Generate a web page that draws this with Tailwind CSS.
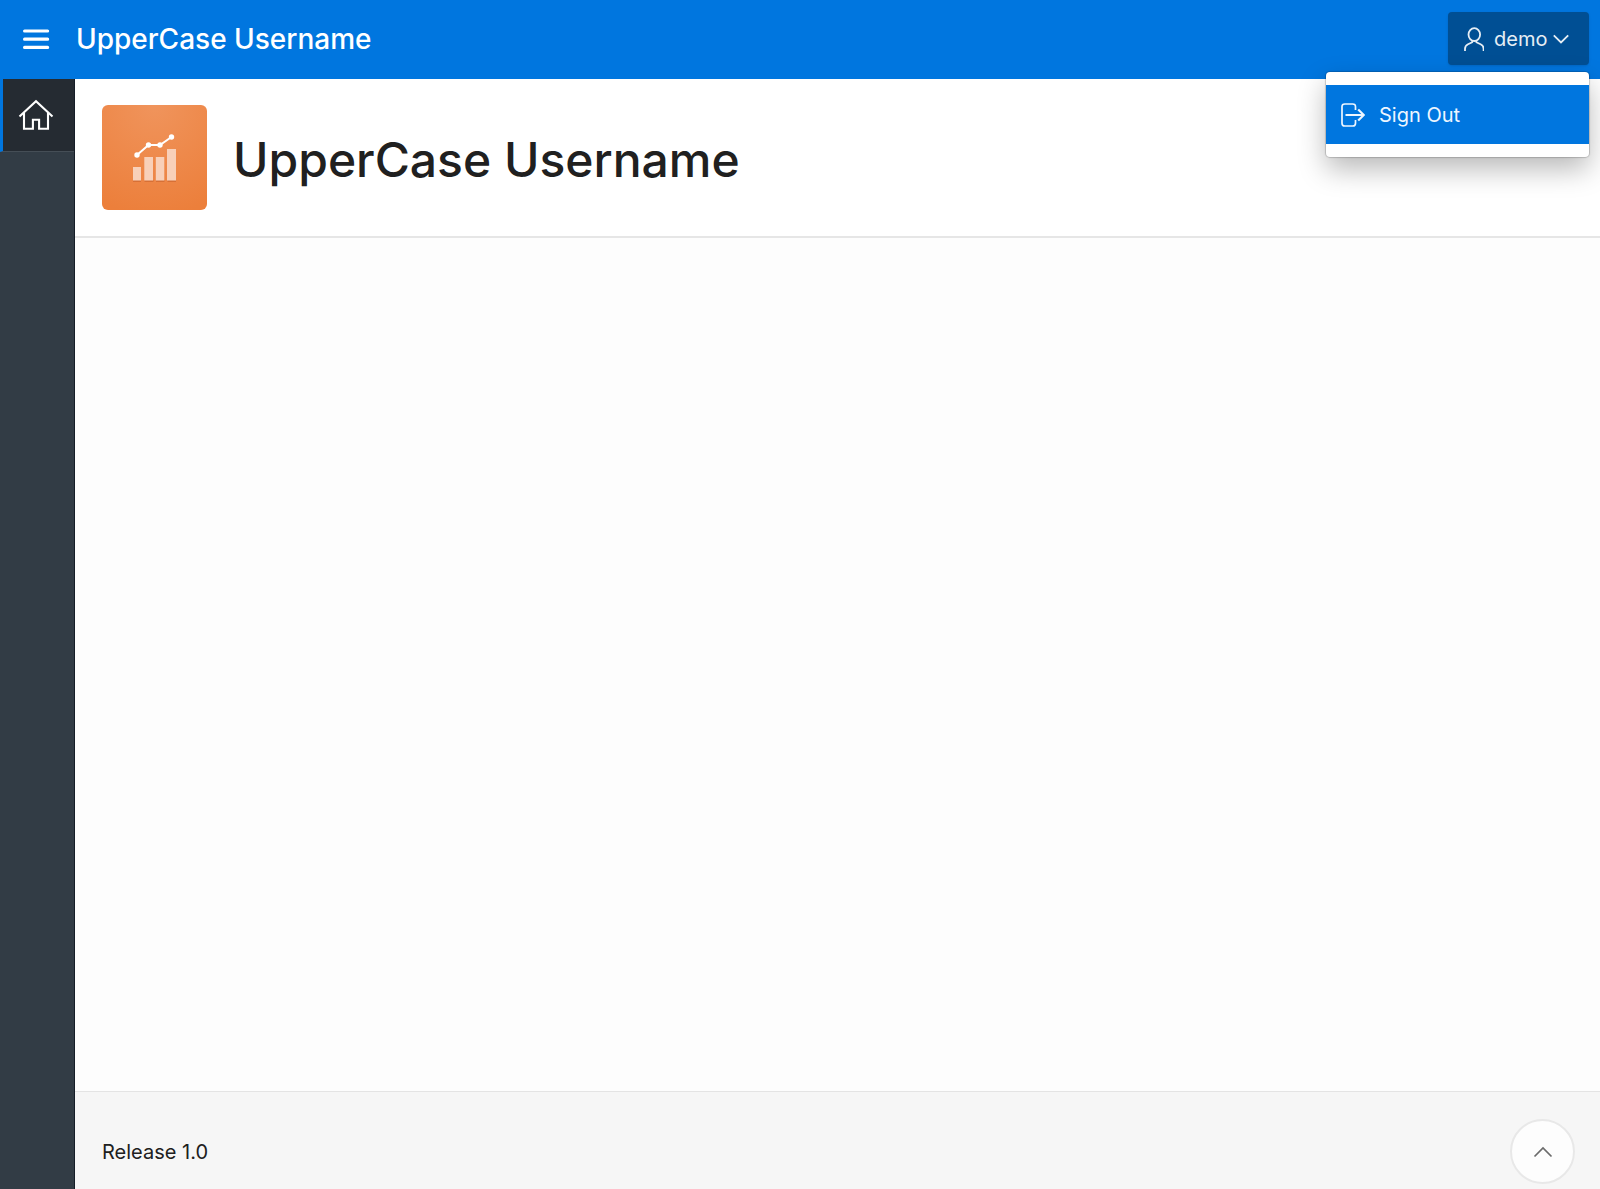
<!DOCTYPE html>
<html lang="en">
<head>
<meta charset="utf-8">
<meta name="viewport" content="width=device-width, initial-scale=1">
<title>UpperCase Username</title>
<script src="https://cdn.jsdelivr.net/npm/@tailwindcss/browser@4"></script>
</head>
<body class="flex min-h-screen flex-col bg-[#fdfdfd] font-['Inter',sans-serif] text-xl text-[#202020]">
  <header class="flex h-[79px] items-center bg-[#0076df] pr-[11px] pb-0.5 text-white">
    <button type="button" aria-label="Toggle navigation" class="flex w-[72px] justify-center">
      <svg class="h-6 w-7" viewBox="0 0 28 24" fill="none" stroke="currentColor" stroke-width="3.2" stroke-linecap="round"><path d="M2.600 4h23M2.600 12.200h23M2.600 20.400h23"/></svg>
    </button>
    <a href="#" class="pl-1 text-[28px] leading-8 font-medium">UpperCase Username</a>
    <div class="relative ml-auto">
      <button type="button" aria-haspopup="menu" aria-expanded="true" class="flex h-[53px] w-[141px] items-center rounded bg-[#004f94] pl-4 text-[#e6eef5] shadow">
        <svg class="h-6 w-5" viewBox="0 0 20 24" fill="none" stroke="currentColor" stroke-width="1.8"><ellipse cx="10.3" cy="7.6" rx="5.8" ry="6.4"/><path d="M1 24v-2.200c0-2.300 1-3.500 3-4.500l3.700-1.800c.8-.4.800-1 .6-1.800M19.600 24v-2.200c0-2.300-1-3.500-3-4.500l-3.700-1.800c-.8-.4-.8-1-.6-1.800"/></svg>
        <span class="ml-2.5">demo</span>
        <svg class="ml-1.5 h-4 w-4" viewBox="0 0 16 16" fill="none" stroke="currentColor" stroke-width="1.8"><path d="M.8 4.300 8 11.500l7.200-7.200"/></svg>
      </button>
      <div role="menu" class="absolute top-full right-0 z-10 mt-[7px] w-[263px] rounded bg-white py-[13px] shadow-[0_0_1px_1px_rgba(0,0,0,0.18),0_12px_28px_rgba(0,0,0,0.28)]">
        <button type="button" role="menuitem" class="flex h-[59px] w-full items-center bg-[#0076df] pl-[15px] text-[#eef6ff]">
          <svg class="h-6 w-6" viewBox="0 0 24 24" fill="none" stroke="currentColor" stroke-width="1.7"><path d="M14.500 7V3.800Q14.500 1 11.700 1H3.800Q1 1 1 3.800v16.400Q1 23 3.800 23h7.900q2.800 0 2.800-2.800V17"/><path d="M4.500 12H23M17.200 6.500l5.600 5.500-5.600 5.500" stroke-width="2.2"/></svg>
          <span class="ml-3.5">Sign Out</span>
        </button>
      </div>
    </div>
  </header>
  <div class="flex flex-1">
    <nav aria-label="Main" class="w-[75px] shrink-0 border-r border-[#151d27] bg-[#323c45]">
      <a href="#" aria-label="Home" class="flex h-[73px] items-center justify-center border-b border-l-3 border-b-[#454e56] border-l-[#0076df] bg-[#252b32] pr-1.5 text-white">
        <svg class="h-8 w-9" viewBox="0 0 36 32" fill="none" stroke="currentColor" stroke-width="2.1"><path d="M1.500 17.500 18 2.300l16.500 15.200"/><path d="M6 13.500v16.300h8.900v-9h6.200v9H30V13.500"/></svg>
      </a>
    </nav>
    <div class="flex min-w-0 flex-1 flex-col">
      <div class="flex items-center gap-[26px] border-b-2 border-[#e6e6e6] bg-white p-[26px] pl-[27px]">
        <svg class="size-[105px] shrink-0 rounded-md" viewBox="0 0 105 105" aria-hidden="true">
          <defs><radialGradient id="tile" cx=".5" cy="0" r="1.05"><stop offset="0" stop-color="#f0945c"/><stop offset="1" stop-color="#ec7f3b"/></radialGradient></defs>
          <rect width="105" height="105" fill="url(#tile)"/>
          <path d="M31 76h8M42.500 76h9M54 76h8.500M65.500 76H74" stroke="#cf6a32" stroke-width="1.500"/>
          <path d="M31 62h8v13.500h-8zM42.300 52h8.700v23.500h-8.700zM53.800 52h8.500v23.500h-8.500zM65 44h9v31.500h-9z" fill="#f8d0b9"/>
          <path d="M35 50 46.500 40H58l11.500-8" fill="none" stroke="#fff" stroke-width="2"/>
          <g fill="#fff"><circle cx="35" cy="50" r="2.700"/><circle cx="46.500" cy="40" r="2.700"/><circle cx="58" cy="40" r="2.700"/><circle cx="69.500" cy="32" r="2.700"/></g>
        </svg>
        <h1 class="pt-1 text-5xl leading-none font-medium">UpperCase Username</h1>
      </div>
      <main class="flex-1"></main>
      <footer class="flex h-[98px] items-center justify-between border-t border-[#e4e4e4] bg-[#f6f6f6] pt-[22px] pr-[25px] pl-[27px]">
        <span>Release 1.0</span>
        <a href="#" aria-label="Start of page" class="flex size-[65px] items-center justify-center rounded-full border-2 border-[#e8e8e8] bg-[#fdfdfd] text-[#6b6b6b]">
          <svg class="h-5 w-5" viewBox="0 0 20 20" fill="none" stroke="currentColor" stroke-width="1.700"><path d="M1.500 14.500 10 6l8.500 8.500"/></svg>
        </a>
      </footer>
    </div>
  </div>
</body>
</html>
